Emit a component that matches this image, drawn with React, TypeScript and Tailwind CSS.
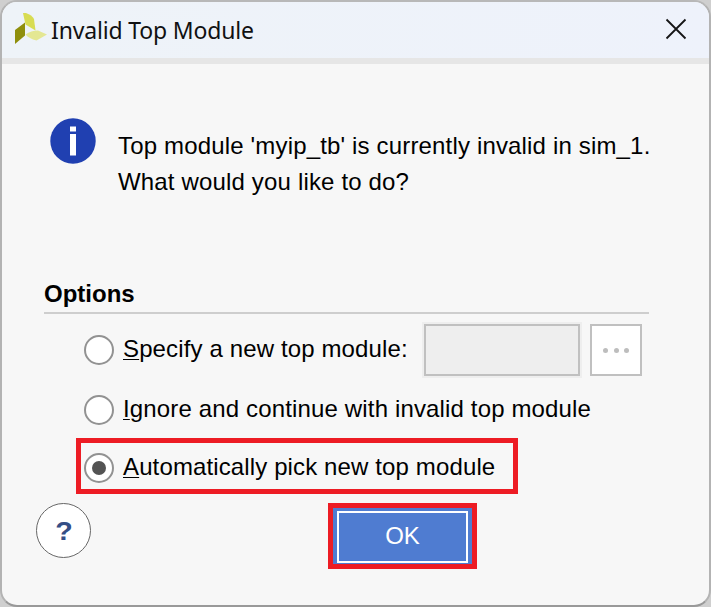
import type { ReactNode } from "react";

function Logo() {
  return (
    <svg width="33" height="33" viewBox="0 0 33 33" className="shrink-0">
      <path d="M9 1L12 1Q18 3 20 7L21.5 18.5L11.5 12.5Z" fill="#d8dc53" />
      <path d="M1 18L11 10.5V23.5L1 32Z" fill="#8f8f0c" />
      <path d="M11.5 22.5Q17 18.5 24 18.5L33 22.5L22.5 28.5Q15 26.5 11.5 22.5Z" fill="#e4e793" />
    </svg>
  );
}

function Radio({ checked = false }: { checked?: boolean }) {
  return (
    <span className="flex size-[30px] shrink-0 items-center justify-center rounded-full border-2 border-[#929292] bg-white">
      {checked && <span className="size-[14px] rounded-full bg-[#535353]" />}
    </span>
  );
}

function Label({ mnemonic, children, className }: { mnemonic: string; children: ReactNode; className: string }) {
  return (
    <span className={`ml-[9px] pb-[2px] whitespace-pre ${className}`}>
      <span className="underline decoration-1 underline-offset-[2px]">{mnemonic}</span>
      {children}
    </span>
  );
}

export default function App() {
  return (
    <div className="h-[607px] w-[711px] overflow-hidden bg-[#cfcfcf] font-['Liberation_Sans',Arial,sans-serif] text-[24px] leading-[36px] text-black">
      <div className="h-full w-full overflow-hidden rounded-[17px] border-2 border-t-[#b8b8b8] border-r-[#b3b3b3] border-b-[#999999] border-l-[#b3b3b3] bg-[#f7f7f7]">
        <header className="flex h-[62px] items-start border-b-[6px] border-[#e6e6e6] bg-linear-to-r from-[#eef3f8] to-[#eef2fb] pl-3">
          <div className="pt-[10px]">
            <Logo />
          </div>
          <h1 className="ml-1 pt-[10px] font-['Noto_Sans','Open_Sans',sans-serif] text-[23px] tracking-[-0.17px] whitespace-pre text-[#111111]">Invalid Top Module</h1>
          <svg width="22" height="22" viewBox="0 0 22 22" className="mt-4 mr-[22px] ml-auto">
            <path d="M1.5 1.5L20.5 20.5M20.5 1.5L1.5 20.5" stroke="#151515" strokeWidth="1.8" />
          </svg>
        </header>

        <section className="flex h-[213px] items-start pt-[54px] pl-12">
          <svg width="46" height="46" viewBox="0 0 46 46" className="shrink-0">
            <circle cx="23" cy="23" r="22.7" fill="#2040b1" />
            <path d="M20 8.5h6v5h-6zM20 16h6v21.5h-6z" fill="white" />
          </svg>
          <div className="ml-[22px] pt-[10px] tracking-[0.165px] whitespace-pre">
            <p>Top module 'myip_tb' is currently invalid in sim_1.</p>
            <p>What would you like to do?</p>
          </div>
        </section>

        <section className="pl-[42px]">
          <h2 className="h-[37px] w-[605px] border-b-2 border-[#cecece] leading-[34px] font-bold">Options</h2>
          <div className="ml-10 flex h-[72px] items-center">
            <Radio />
            <Label mnemonic="S" className="w-[299px] tracking-[0.13px]">pecify a new top module:</Label>
            <div className="shrink-0 border-2 border-[#eeeeee]">
              <div className="h-[52px] w-[156px] border-2 border-[#c0c0c0] bg-[#eeeeee]" />
            </div>
            <button className="ml-2 flex size-[52px] shrink-0 items-center justify-center gap-[5.5px] border-2 border-[#c0c0c0] bg-white">
              <span className="size-[5px] rounded-full bg-[#bdbdbd]" />
              <span className="size-[5px] rounded-full bg-[#bdbdbd]" />
              <span className="size-[5px] rounded-full bg-[#bdbdbd]" />
            </button>
          </div>
          <div className="ml-10 flex h-12 items-center">
            <Radio />
            <Label mnemonic="I" className="tracking-[0.15px]">gnore and continue with invalid top module</Label>
          </div>
          <div className="mt-1 ml-8 flex h-14 w-[442px] items-center border-5 border-[#ed1c24] pt-[3px] pl-[3px]">
            <Radio checked />
            <Label mnemonic="A" className="tracking-[0.125px]">utomatically pick new top module</Label>
          </div>
        </section>

        <footer className="flex items-start pt-[9px] pl-[34px]">
          <button className="flex size-[55px] items-center justify-center rounded-full border border-[#666666] bg-white text-[26px] font-bold text-[#344e86]">
            <span className="scale-x-110">?</span>
          </button>
          <div className="ml-[237px] h-[66px] w-[149px] border-5 border-[#ed1c24] bg-[#4f7cd1] pt-[3px] pl-1">
            <button className="block h-[52px] w-[131px] border-2 border-white pb-[2px] text-white">OK</button>
          </div>
        </footer>
      </div>
    </div>
  );
}
